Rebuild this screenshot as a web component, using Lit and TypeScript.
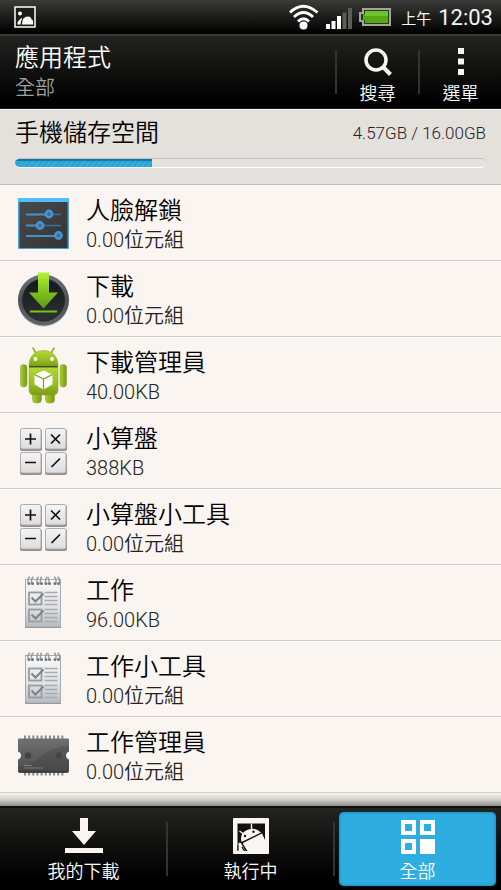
import { LitElement, html, css, svg } from "lit";
import { customElement, property } from "lit/decorators.js";

const icons: Record<string, unknown> = {
  sliders: svg`
    <defs>
      <linearGradient id="sl" x1="0" y1="0" x2="1" y2="1">
        <stop offset="0" stop-color="#4a4a4a"/><stop offset="1" stop-color="#343434"/>
      </linearGradient>
    </defs>
    <rect x="4" y="4" width="51" height="51" rx="1" fill="#4a9fdc"/>
    <rect x="4" y="4" width="51" height="4" fill="#4fc0f7"/>
    <rect x="5.500" y="8" width="48" height="46" fill="url(#sl)"/>
    <g stroke="#3a6f98" stroke-width="1.600">
      <path d="M12 20.500H47M12 31.500H47M12 42H44"/>
    </g>
    <path d="M12 20.500h20M12 31.500h12M12 42h30" stroke="#4590c8" stroke-width="2"/>
    <g fill="#4d6a80" stroke="#4296dd" stroke-width="2.400">
      <circle cx="35" cy="20" r="3.200"/><circle cx="26" cy="31.500" r="3.200"/><circle cx="44.500" cy="41.500" r="3.200"/>
    </g>`,
  download: svg`
    <defs>
      <linearGradient id="dr" x1="0" y1="0" x2="0" y2="1">
        <stop offset="0" stop-color="#6d7376"/><stop offset=".5" stop-color="#4a5054"/><stop offset="1" stop-color="#5e6467"/>
      </linearGradient>
      <linearGradient id="dd" x1="0" y1="0" x2="0" y2="1">
        <stop offset="0" stop-color="#14181b"/><stop offset="1" stop-color="#2c3236"/>
      </linearGradient>
      <linearGradient id="da" x1="0" y1="0" x2="0" y2="1">
        <stop offset="0" stop-color="#b3f436"/><stop offset=".5" stop-color="#84c41e"/><stop offset="1" stop-color="#5f9a12"/>
      </linearGradient>
    </defs>
    <circle cx="29.500" cy="31" r="25.500" fill="#b9b6b3"/>
    <circle cx="29.500" cy="30" r="25.500" fill="url(#dr)"/>
    <circle cx="29.500" cy="30" r="21" fill="url(#dd)" stroke="#23282b" stroke-width="1"/>
    <path d="M24 2.500h11v20h9L29.500 38.500 15 22.500h9z" fill="url(#da)"/>
    <path d="M16 41.500h27" stroke="#7fc01c" stroke-width="2"/>`,
  android: svg`
    <defs>
      <linearGradient id="an" x1="0" y1="0" x2="0" y2="1">
        <stop offset="0" stop-color="#b3d92f"/><stop offset=".6" stop-color="#97bd25"/><stop offset="1" stop-color="#7b9d18"/>
      </linearGradient>
      <linearGradient id="al" x1="0" y1="0" x2="1" y2="0">
        <stop offset="0" stop-color="#a9cf2c"/><stop offset="1" stop-color="#75961a"/>
      </linearGradient>
    </defs>
    <path d="M22.500 8l-3.500-6M36.500 8l3.500-6" stroke="#8fae2c" stroke-width="1.600" stroke-linecap="round"/>
    <g stroke="#86a523" stroke-width=".5">
      <g fill="url(#al)">
        <rect x="18.500" y="40" width="9" height="17" rx="3.500"/><rect x="31.500" y="40" width="9" height="17" rx="3.500"/>
        <rect x="6.500" y="18.500" width="6.500" height="22.500" rx="3"/><rect x="46" y="18.500" width="6.500" height="22.500" rx="3"/>
      </g>
      <g fill="url(#an)">
        <path d="M15 20C15 10 21 4.500 29.500 4.500S44 10 44 20z"/>
        <path d="M15 21.500h29v22.500q0 5-5 5H20q-5 0-5-5z"/>
      </g>
    </g>
    <path d="M15 20.700h29" stroke="#42540e" stroke-width="1.400"/>
    <circle cx="21.500" cy="13" r="1.900" fill="#fff"/><circle cx="38" cy="13" r="1.900" fill="#fff"/>
    <path d="M29.500 24.500l9 4v10l-9 5-9-5v-10z" fill="#fff"/>
    <path d="M20.500 28.500l9 4.500 9-4.500M29.500 33v10.500" fill="none" stroke="#7d962b" stroke-width="1.200"/>`,
  calc: svg`
    <defs>
      <linearGradient id="ck" x1="0" y1="0" x2="0" y2="1">
        <stop offset="0" stop-color="#f5f5f5"/><stop offset="1" stop-color="#dcdcdc"/>
      </linearGradient>
    </defs>
    <g transform="translate(0 -1)">
    <g fill="#8e8e8e">
      <rect x="6" y="8" width="22" height="22" rx="2.500"/><rect x="31" y="8" width="22" height="22" rx="2.500"/>
      <rect x="6" y="32" width="22" height="22" rx="2.500"/><rect x="31" y="32" width="22" height="22" rx="2.500"/>
    </g>
    <g fill="url(#ck)" stroke="#adadad" stroke-width="1">
      <rect x="6.500" y="7.500" width="20.500" height="20.500" rx="2"/><rect x="31.500" y="7.500" width="20.500" height="20.500" rx="2"/>
      <rect x="6.500" y="31.500" width="20.500" height="20.500" rx="2"/><rect x="31.500" y="31.500" width="20.500" height="20.500" rx="2"/>
    </g>
    <path d="M11 18h11M16.500 12.500v11M37 13.500l9 9M46 13.500l-9 9M11 41.500h11M37.500 46l8.500-8.500" stroke="#111" stroke-width="1.700"/>
    </g>`,
  tasks: svg`
    <defs>
      <linearGradient id="tp" x1="0" y1="0" x2="0" y2="1">
        <stop offset="0" stop-color="#f8f8f8"/><stop offset=".6" stop-color="#dfe2e4"/><stop offset="1" stop-color="#b4bbc1"/>
      </linearGradient>
    </defs>
    <rect x="11" y="6" width="36" height="48" fill="#84898c"/>
    <rect x="11.500" y="5.500" width="35" height="47.500" fill="url(#tp)" stroke="#a7abae"/>
    <g fill="#6f7276">
      <circle cx="15" cy="9.500" r="1.500"/><circle cx="18.500" cy="9.500" r="1.500"/>
      <circle cx="24" cy="9.500" r="1.500"/><circle cx="27.500" cy="9.500" r="1.500"/>
      <circle cx="32" cy="9.500" r="1.500"/><circle cx="35.500" cy="9.500" r="1.500"/>
      <circle cx="41" cy="9.500" r="1.500"/><circle cx="44.500" cy="9.500" r="1.500"/>
    </g>
    <path d="M14 9q-.5-5 2-6M17.500 9q-.5-5 2-6M23 9q-.5-5 1.500-6M26.500 9q-.5-5 1.500-6M31.500 9q0-5 1.500-6M35 9q0-5-1.500-6M40 3q2.500 1 2 6M43.500 3q2.500 1 2 6" fill="none" stroke="#96999c" stroke-width="1.400"/>
    <g fill="none" stroke="#999c9e" stroke-width="1.800">
      <rect x="15" y="18.500" width="12.500" height="12"/><rect x="15" y="35.500" width="12.500" height="12"/>
      <path d="M17.500 23.500l4 4 8-8M17.500 40.500l4 4 8-8" stroke="#7f8284" stroke-width="2"/>
      <path d="M30.500 18.500h13M30.500 22.500h13M30.500 26.500h13M30.500 30.500h13M30.500 35.500h13M30.500 39.500h13M30.500 43.500h13M30.500 47.500h13" stroke="#a9acae" stroke-width="1.300"/>
    </g>`,
  chip: svg`
    <defs>
      <linearGradient id="ch" x1="0" y1="0" x2="0" y2="1">
        <stop offset="0" stop-color="#707070"/><stop offset="1" stop-color="#4c4c4c"/>
      </linearGradient>
    </defs>
    <g transform="translate(0 -1)">
    <path d="M10 13h40M10 48h40" stroke="#8c8884" stroke-width="5" stroke-dasharray="2 2.150"/>
    <path d="M5 13.500h49q1 0 1 1v12q-3 1-3 4t3 4v12q0 1-2 1H6q-2 0-2-1V34.500q3-1 3-4t-3-4v-12q0-1 1-1z" fill="url(#ch)"/>
    <path d="M55 20Q36 22 22 35 14 41 4 42v4.500q0 1 2 1h47q2 0 2-1v-12q-3-1-3-4t3-4z" fill="#3c3c3c" opacity=".3"/>
    <path d="M5 47h49" stroke="#373737" stroke-width="1.500"/>
    <circle cx="14" cy="30.500" r="3.200" fill="#444"/><circle cx="45" cy="30.500" r="3.200" fill="#444"/>
    <path d="M10 40.500h8M10 43h19" stroke="#a0a0a0" stroke-width=".7" opacity=".8"/>
    </g>`,
};

interface AppEntry { name: string; size: string; icon: string; }

const APPS: AppEntry[] = [
  { name: "人臉解鎖", size: "0.00位元組", icon: "sliders" },
  { name: "下載", size: "0.00位元組", icon: "download" },
  { name: "下載管理員", size: "40.00KB", icon: "android" },
  { name: "小算盤", size: "388KB", icon: "calc" },
  { name: "小算盤小工具", size: "0.00位元組", icon: "calc" },
  { name: "工作", size: "96.00KB", icon: "tasks" },
  { name: "工作小工具", size: "0.00位元組", icon: "tasks" },
  { name: "工作管理員", size: "0.00位元組", icon: "chip" },
];

@customElement("app-row")
export class AppRow extends LitElement {
  @property({ attribute: false }) entry!: AppEntry;

  static styles = css`
    :host { display: block; }
    .row {
      display: flex; align-items: center; gap: 12px;
      box-sizing: border-box; width: 100%; height: 76px; padding: 3px 14px 0;
      border: 0; border-bottom: 1px solid #cfcbc8;
      box-shadow: inset 0 1px #fffdfb;
      background: #faf5f1; text-align: left; font: inherit; color: #000;
    }
    .icon { width: 60px; height: 60px; flex: none; }
    .text { display: flex; flex-direction: column; }
    .name { font-size: 24px; line-height: 32px; }
    .size { font-size: 20px; line-height: 26px; color: #222; }
  `;

  render() {
    return html`<button class="row">
      <svg class="icon" viewBox="0 0 60 60" aria-hidden="true">${icons[this.entry.icon]}</svg>
      <span class="text">
        <span class="name">${this.entry.name}</span>
        <span class="size">${this.entry.size}</span>
      </span>
    </button>`;
  }
}

@customElement("app-root")
export class AppRoot extends LitElement {
  static styles = css`
    :host {
      display: flex; flex-direction: column; min-height: 100vh;
      background: #faf5f1;
      font-family: Roboto, "Noto Sans CJK TC", sans-serif; font-weight: 350;
    }
    button { font: inherit; color: inherit; border: 0; padding: 0; background: none; }
    .status {
      display: flex; align-items: center; height: 34px; padding: 0 8px 0 14px;
      background: linear-gradient(#3b3b39, #1c1c1b 50%, #000);
      color: #f4f4f4; font-weight: 400;
    }
    .status .fill { flex: 1; }
    .photo { width: 22px; height: 22px; }
    .signals { width: 104px; height: 28px; margin-right: 9px; }
    .ampm { font-size: 15px; line-height: 24px; margin-right: 7px; padding-top: 4px; }
    .clock { font-size: 22px; line-height: 24px; padding-top: 2px; }
    .header {
      display: flex; align-items: center; height: 75px; box-sizing: border-box;
      border-top: 2px solid #3c3c3a; border-bottom: 1px solid #1b1b1b;
      background: linear-gradient(#232321, #000 90%);
      color: #fff;
    }
    .heading { flex: 1; padding-left: 15px; }
    h1, h2, p { margin: 0; font-weight: inherit; }
    h1 { font-size: 24px; line-height: 32px; }
    .heading p { font-size: 20px; line-height: 28px; color: #a0a0a0; }
    .action {
      display: flex; flex-direction: column; align-items: center; gap: 4px;
      width: 81px; padding-top: 7px; font-size: 18px; line-height: 24px;
    }
    .action svg { width: 32px; height: 32px; }
    .rule { width: 2px; height: 44px; background: #333331; }
    .storage {
      height: 76px; box-sizing: border-box; padding: 7px 15px 0;
      background: #e4e0dc; border-top: 1px solid #f8f6f4; border-bottom: 1px solid #bdbab7;
      color: #000;
    }
    .line { display: flex; justify-content: space-between; align-items: center; }
    h2 { font-size: 24px; line-height: 32px; }
    .used { font-size: 17px; line-height: 32px; color: #222; }
    .bar {
      height: 10px; margin-top: 9px; border-radius: 5px; overflow: hidden; box-sizing: border-box;
      background: #e3e2df; border-top: 1px solid #c4c2bf; border-bottom: 1px solid #fff;
    }
    .value {
      height: 100%;
      background: repeating-linear-gradient(135deg, #27a3d8 0 2px, #35aedf 2px 4px);
      box-shadow: inset 0 2px 1px #14769f;
    }
    .list { flex: 1; }
    .fade { height: 13px; background: linear-gradient(#f8f4f0, #d4d0cc 50%, #8f8b88); }
    .tabs {
      display: flex; align-items: center; height: 84px; box-sizing: border-box;
      border-top: 2px solid #111;
      background: linear-gradient(#232321, #000 85%); color: #fff;
    }
    .tab {
      flex: 1; box-sizing: border-box; height: 74px; margin: 0 5px;
      display: flex; flex-direction: column; align-items: center; gap: 3px;
      padding-top: 4px; font-size: 18px; line-height: 26px;
    }
    .tab svg { width: 40px; height: 40px; }
    .active {
      border-radius: 5px; background: #2dade0;
      box-shadow: inset 0 0 3px #176c93, 0 0 2px #0d4560;
    }
    .tabs .rule { height: 54px; margin: 0 -1px; }
  `;

  private used = 4.57;
  private total = 16;

  render() {
    return html`
      <div class="status">
        <svg class="photo" viewBox="0 0 22 22">
          <rect x="1" y="1" width="20" height="20" fill="#1c1c1b" stroke="#fff" stroke-width="1.500"/>
          <circle cx="6" cy="7.500" r="2" fill="#fff"/>
          <path d="M3.500 18.500v-2q2-4 5-4.500-2 3-2 6.500zM8 18.500q0-8 6-8 3 0 3.500 3 1.500 0 1.500 2v3z" fill="#fff"/>
        </svg>
        <span class="fill"></span>
        <svg class="signals" viewBox="0 0 104 28">
          <g fill="none" stroke="#fff" stroke-width="2.800">
            <path d="M2 9.500q13-12.500 27.500 0M6 14q9.500-9 19 0M10 18.500q5.500-5.500 11 0"/>
          </g>
          <circle cx="15.500" cy="22.500" r="4" fill="#fff"/>
          <path d="M38 21h4v5h-4zM43.500 18h4v8h-4zM49 13h4v13h-4z" fill="#fff"/>
          <path d="M54.500 9.500h4V26h-4zM60 5h4v21h-4z" fill="#5c5c5a"/>
          <path d="M75 6h27v16H75v-4h-3v-8h3z" fill="#20401a" stroke="#a3a3a1" stroke-width="2"/>
          <path d="M77 8h23v12H77v-3h-2v-6h2z" fill="#55a812"/>
          <path d="M77 8h23v5H77z" fill="#72c22e"/>
        </svg>
        <span class="ampm">上午</span>
        <span class="clock">12:03</span>
      </div>
      <header class="header">
        <div class="heading"><h1>應用程式</h1><p>全部</p></div>
        <span class="rule"></span>
        <button class="action">
          <svg viewBox="0 0 32 32"><circle cx="14" cy="14" r="10" fill="none" stroke="#faf5f1" stroke-width="3.500"/>
            <path d="M20.500 20.500l8 8" stroke="#faf5f1" stroke-width="4"/></svg>
          搜尋
        </button>
        <span class="rule"></span>
        <button class="action">
          <svg viewBox="0 0 32 32"><path d="M13 2h6v6h-6zM13 12.500h6v6h-6zM13 23h6v6h-6z" fill="#faf5f1"/></svg>
          選單
        </button>
      </header>
      <section class="storage">
        <div class="line"><h2 id="storage-label">手機儲存空間</h2>
          <span class="used">${this.used}GB / ${this.total.toFixed(2)}GB</span></div>
        <div class="bar" role="progressbar" aria-labelledby="storage-label" aria-valuemin="0"
          aria-valuemax=${this.total} aria-valuenow=${this.used}>
          <div class="value" style="width:${Math.round((this.used / this.total) * 100)}%"></div>
        </div>
      </section>
      <main class="list">${APPS.map((a) => html`<app-row .entry=${a}></app-row>`)}</main>
      <div class="fade"></div>
      <nav class="tabs">
        <button class="tab">
          <svg viewBox="0 0 40 40"><path d="M16 2h8v13h8L20 29 8 15h8zM1 32h38v5H1z" fill="#faf5f1"/></svg>
          我的下載
        </button>
        <span class="rule"></span>
        <button class="tab">
          <svg viewBox="0 0 40 40">
            <rect x="2" y="2" width="36" height="36" rx="1" fill="#faf5f1"/>
            <path d="M6.500 7.500h27.500v17l-3-7-19 9.500 5 8H6.500z" fill="#111"/>
            <path d="M31 18l3 6.500V35H16.500L12 28z" fill="#faf5f1"/>
            <path d="M10.500 26Q8.500 18 15 14.500 23 10 30 16.500z" fill="#faf5f1"/>
            <path d="M8.500 15l4 3M20.500 7.500V14" stroke="#faf5f1" stroke-width="1.400"/>
            <path d="M7 34q-1.500-5 1.500-7.500 2 0 2.500 2.500l3.500 6H7z" fill="#faf5f1"/>
            <path d="M7 29v5.500M11 31l2.500 4" stroke="#111" stroke-width="1.300"/>
            <circle cx="14" cy="20" r="1.200" fill="#111"/><circle cx="22.500" cy="15.800" r="1.200" fill="#111"/>
          </svg>
          執行中
        </button>
        <span class="rule"></span>
        <button class="tab active" aria-current="page">
          <svg viewBox="0 0 40 40">
            <path d="M5 6h11v11H5zM24 6h11v11H24zM5 25h11v11H5z" fill="none" stroke="#fff" stroke-width="4"/>
            <path d="M22 23h15v15H22z" fill="#fff"/>
          </svg>
          全部
        </button>
      </nav>
    `;
  }
}
